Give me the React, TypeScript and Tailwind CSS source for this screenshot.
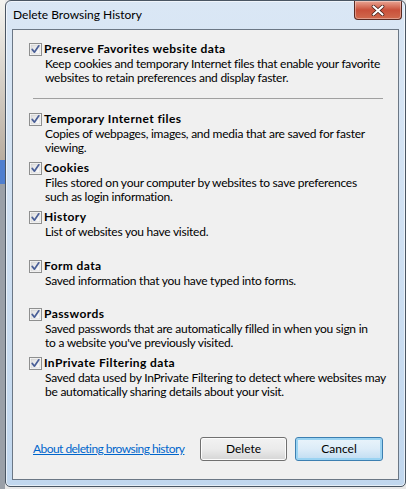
import React from 'react';

const font = { fontFamily: 'Lato, "Open Sans", sans-serif' };

function Check() {
  return (
    <svg width="13" height="13" viewBox="0 0 13 13" className="shrink-0">
      <defs>
        <linearGradient id="cbg" x1="0" y1="0" x2="1" y2="1">
          <stop offset="0" stopColor="#dcdcdc" />
          <stop offset="1" stopColor="#ffffff" />
        </linearGradient>
      </defs>
      <rect x="0.5" y="0.5" width="12" height="12" fill="#fff" stroke="#8e8f8f" />
      <rect x="2" y="2" width="9" height="9" fill="url(#cbg)" stroke="#c8c8c8" strokeWidth="0.6" />
      <path d="M3.2 6.4 L5.4 9.2 L9.8 2.8" fill="none" stroke="#4a5f97" strokeWidth="1.7" strokeLinecap="round" strokeLinejoin="round" />
    </svg>
  );
}

interface Item {
  title: string;
  lines: string[];
  mt: string;
}

const items: Item[] = [
  { title: 'Temporary Internet files', lines: ['Copies of webpages, images, and media that are saved for faster', 'viewing.'], mt: 'mt-[12px]' },
  { title: 'Cookies', lines: ['Files stored on your computer by websites to save preferences', 'such as login information.'], mt: 'mt-[5px]' },
  { title: 'History', lines: ['List of websites you have visited.'], mt: 'mt-[5px]' },
  { title: 'Form data', lines: ['Saved information that you have typed into forms.'], mt: 'mt-[19px]' },
  { title: 'Passwords', lines: ['Saved passwords that are automatically filled in when you sign in', "to a website you've previously visited."], mt: 'mt-[18px]' },
  { title: 'InPrivate Filtering data', lines: ['Saved data used by InPrivate Filtering to detect where websites may', 'be automatically sharing details about your visit.'], mt: 'mt-[5px]' },
];

function Option({ title, lines, mt }: Item) {
  return (
    <div className={`flex flex-col ${mt}`}>
      <div className="flex h-[16px] items-center gap-[2px]">
        <Check />
        <span className="whitespace-nowrap text-[12px] font-bold leading-[16px] tracking-[0.4px] text-black">{title}</span>
      </div>
      <div className="pl-[16px] text-[12px] leading-[14px] tracking-[-0.25px] text-black">
        {lines.map((l) => (
          <div key={l} className="whitespace-nowrap">{l}</div>
        ))}
      </div>
    </div>
  );
}

export default function App() {
  return (
    <div className="flex h-[489px] w-[406px] overflow-hidden bg-[#e8e8e8]" style={font}>
      {/* background behind window */}
      <div className="flex w-[5px] shrink-0 flex-col bg-[#f4f4f2]">
        <div className="h-[160px] bg-gradient-to-b from-[#f4f4f0] to-[#b8ada0]" />
        <div className="h-[24px] bg-[#4f7fcf]" />
        <div className="flex-1 bg-[#9aa0a8]" />
      </div>

      {/* window frame */}
      <div className="mb-[2px] flex min-w-0 flex-1 flex-col overflow-hidden rounded-t-[6px] rounded-b-[5px] border border-[#4a5663] bg-gradient-to-b from-[#dae7f5] via-[#cfe0f2] to-[#c1d7ee] shadow-[inset_0_0_0_1px_rgba(255,255,255,0.6)]">
        <div className="flex h-[28px] shrink-0 items-start justify-between">
          <span className="mt-[6px] ml-[7px] text-[12px] leading-[16px] text-black">Delete Browsing History</span>
          <div className="mr-[3px] flex h-[19px] w-[48px] shrink-0 items-center justify-center rounded-b-[4px] border border-t-0 border-[#5a2a22] bg-gradient-to-b from-[#e8a493] via-[#c9503a] to-[#d06a4e] shadow-[inset_0_0_0_1px_rgba(255,255,255,0.35)]">
            <svg width="14" height="11" viewBox="0 0 14 11">
              <path d="M2.5 1.5 L11.5 9.5 M11.5 1.5 L2.5 9.5" stroke="#3b1a14" strokeWidth="3.6" strokeLinecap="round" />
              <path d="M2.5 1.5 L11.5 9.5 M11.5 1.5 L2.5 9.5" stroke="#ffffff" strokeWidth="2.2" strokeLinecap="round" />
            </svg>
          </div>
        </div>

        <div className="mx-[6px] mb-[6px] flex min-w-0 flex-1 flex-col border border-[#6b7785] bg-[#f0f0f0] pl-[16px] pr-[15px] pt-[11px]">
          <Option
            title="Preserve Favorites website data"
            lines={['Keep cookies and temporary Internet files that enable your favorite', 'websites to retain preferences and display faster.']}
            mt="mt-0"
          />
          <div className="ml-[4px] mt-[13px] h-px bg-[#a0a0a0]" />
          {items.map((it) => (
            <Option key={it.title} {...it} />
          ))}

          <div className="mt-auto mb-[18px] flex items-center">
            <a href="#" className="ml-[4px] whitespace-nowrap text-[12px] leading-[16px] tracking-[-0.55px] text-[#0066cc] underline">
              About deleting browsing history
            </a>
            <button className="ml-auto h-[24px] w-[87px] shrink-0 rounded-[3px] border border-[#707070] bg-gradient-to-b from-[#f2f2f2] via-[#ebebeb] to-[#d5d5d5] text-[12px] text-black shadow-[inset_0_0_0_1px_#fcfcfc]">
              Delete
            </button>
            <button className="ml-[8px] h-[24px] w-[88px] shrink-0 rounded-[3px] border border-[#3c7fb1] bg-gradient-to-b from-[#eaf4fb] via-[#dcecf8] to-[#bfdcf1] text-[12px] text-black shadow-[inset_0_0_0_2px_#9ad3f2]">
              Cancel
            </button>
          </div>
        </div>
      </div>
    </div>
  );
}
